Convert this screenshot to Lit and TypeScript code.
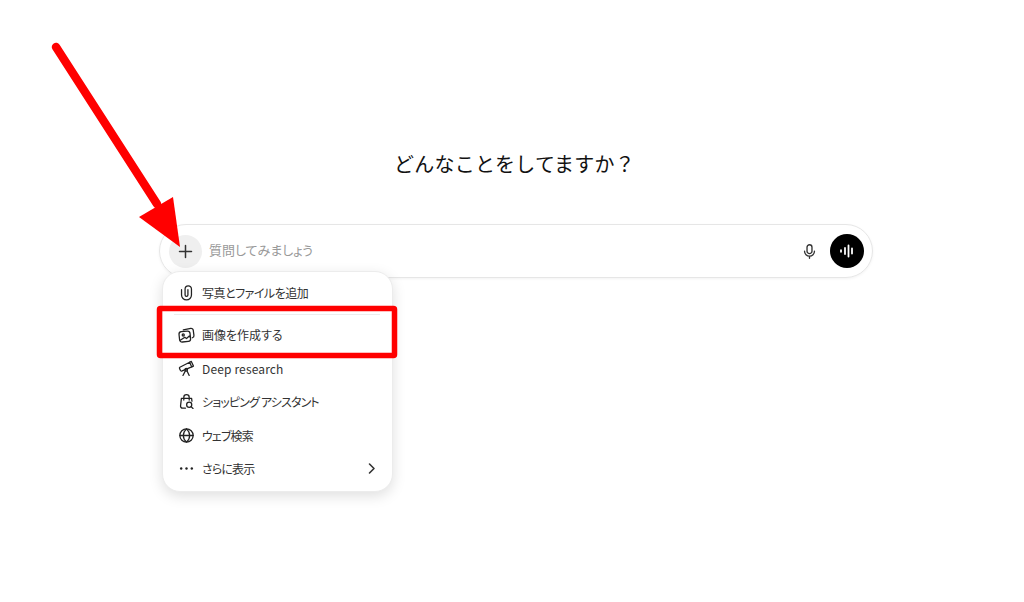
import { LitElement, html, css, svg } from "lit";
import { customElement } from "lit/decorators.js";

const ic = (body: unknown) => html`<svg class="ic" viewBox="0 0 24 24" fill="none" stroke="currentColor" stroke-width="1.8" stroke-linecap="round" stroke-linejoin="round">${body}</svg>`;

const clip = svg`<path d="M5 8v7.5a7 7 0 0 0 14 0V7a4.5 4.5 0 0 0-9 0v8.5a2 2 0 0 0 4 0V8"/>`;
const images = svg`<path d="M7.5 5.6 18 3.4a3 3 0 0 1 3.5 2.5l1 7.4a3 3 0 0 1-2.2 3.3"/><rect x="1.8" y="7.6" width="15.6" height="14.6" rx="3.6" transform="rotate(-6 9.6 14.9)"/><circle cx="7.4" cy="12.6" r="1.5"/><path d="M3.2 20 9.6 15.8l2.4 1.8 4-3.6 1.6 2.4"/>`;
const scope = svg`<path d="M2.6 10.2 16.4 3.2l3 6.6L5.8 15.4a2 2 0 0 1-2.6-1.1L2.2 12a1.4 1.4 0 0 1 .4-1.8Z"/><path d="m16.4 3.2 2.4-1.2 3 6.6-2.4 1.2"/><circle cx="11.6" cy="13.8" r="1.8"/><path d="m10.4 15.4-3.4 6.4M12.8 15.4l3 6.4"/>`;
const bag = svg`<path d="M10.5 21.4H6.4a2.8 2.8 0 0 1-2.8-3.1L4.8 7.6h14.4l.5 4"/><path d="M8.2 10V6a3.8 3.8 0 0 1 7.6 0v4"/><circle cx="15.8" cy="16.6" r="3.6"/><path d="m18.4 19.2 2.8 2.6"/>`;
const globe = svg`<circle cx="12" cy="12" r="9.4"/><path d="M2.6 12h18.8M12 2.6c-6 5.6-6 13.2 0 18.8M12 2.6c6 5.6 6 13.2 0 18.8"/>`;
const dots = svg`<circle cx="4.5" cy="12" r="1.7" fill="currentColor" stroke="none"/><circle cx="12" cy="12" r="1.7" fill="currentColor" stroke="none"/><circle cx="19.5" cy="12" r="1.7" fill="currentColor" stroke="none"/>`;

@customElement("app-root")
export class AppRoot extends LitElement {
  static styles = css`
    :host {
      display: block;
      position: relative;
      height: 602px;
      overflow: hidden;
      background: #fff;
      font-family: "Noto Sans CJK JP", "Noto Sans", sans-serif;
      color: #2f2f2f;
    }
    .page {
      display: flex;
      flex-direction: column;
      padding: 148px 0 0 159px;
      width: 714px;
    }
    h1 {
      margin: 0;
      height: 76px;
      font-size: 20px;
      line-height: 32px;
      font-weight: 400;
      letter-spacing: 0.2px;
      text-align: center;
      color: #111;
      padding-right: 3px;
    }
    .composer {
      box-sizing: border-box;
      height: 54px;
      border: 1px solid #e6e6e6;
      border-radius: 27px;
      box-shadow: 0 1px 3px rgba(0, 0, 0, 0.05);
      display: flex;
      align-items: center;
      padding: 0 8px 0 9px;
      gap: 7px;
    }
    .plus {
      width: 33px;
      height: 33px;
      border-radius: 50%;
      background: #efefef;
      display: flex;
      align-items: center;
      justify-content: center;
      color: #333;
    }
    .plus svg { width: 17px; height: 17px; }
    .ph {
      flex: 1;
      font-size: 13px;
      line-height: 18px;
      margin-top: -2px;
      color: #999;
      font-feature-settings: "palt";
    }
    .mic { width: 17px; height: 17px; color: #333; margin-right: 5px; }
    .voice {
      width: 34px;
      height: 34px;
      border-radius: 50%;
      background: #000;
      display: flex;
      align-items: center;
      justify-content: center;
      color: #fff;
    }
    .voice svg { width: 16px; height: 16px; }
    .menu {
      box-sizing: border-box;
      margin: -7px 0 0 3px;
      width: 231px;
      height: 221px;
      background: #fff;
      border: 1px solid #ececec;
      border-radius: 18px;
      box-shadow: 0 4px 14px rgba(0, 0, 0, 0.13);
      padding: 4px 12px 0 15px;
      display: flex;
      flex-direction: column;
    }
    .row {
      height: 33.5px;
      display: flex;
      align-items: center;
      gap: 7px;
      font-size: 12px;
      color: #333;
      font-feature-settings: "palt";
    }
    .row span { flex: 1; white-space: nowrap; }
    .row span.wide { letter-spacing: 0.15px; }
    .row span.tight { letter-spacing: -0.5px; }
    .row span.tighter { letter-spacing: -0.85px; }
    .ic { width: 17px; height: 17px; flex: none; color: #222; }
    .sep { height: 1px; background: #ececec; margin: 4px 0 3.5px -4px; }
    .chev { width: 15px; height: 15px; color: #333; margin-right: 1.5px; }
    .overlay {
      position: absolute;
      left: 0;
      top: 0;
      width: 1024px;
      height: 602px;
      pointer-events: none;
    }
  `;

  render() {
    return html`
      <div class="page">
        <h1>どんなことをしてますか？</h1>
        <div class="composer">
          <div class="plus">
            <svg viewBox="0 0 17 17" fill="none" stroke="currentColor" stroke-width="1.5" stroke-linecap="round"><path d="M8.5 2.5v12M2.5 8.5h12"/></svg>
          </div>
          <div class="ph">質問してみましょう</div>
          <svg class="mic" viewBox="0 0 24 24" fill="none" stroke="currentColor" stroke-width="1.9" stroke-linecap="round"><rect x="8.5" y="2.5" width="7" height="12.5" rx="3.5"/><path d="M5 11.5a7 7 0 0 0 14 0M12 18.5v3"/></svg>
          <div class="voice">
            <svg viewBox="0 0 16 16" fill="none" stroke="currentColor" stroke-width="1.8" stroke-linecap="round"><path d="M2 7.2v1.6M6 5v6M9.5 2.5v11M13 5.5v5"/></svg>
          </div>
        </div>
        <div class="menu">
          <div class="row">${ic(clip)}<span class="tight">写真とファイルを追加</span></div>
          <div class="sep"></div>
          <div class="row">${ic(images)}<span>画像を作成する</span></div>
          <div class="row">${ic(scope)}<span class="wide">Deep research</span></div>
          <div class="row">${ic(bag)}<span class="tighter">ショッピング アシスタント</span></div>
          <div class="row">${ic(globe)}<span class="tighter">ウェブ検索</span></div>
          <div class="row">${ic(dots)}<span class="tighter">さらに表示</span>
            <svg class="chev" viewBox="0 0 15 15" fill="none" stroke="currentColor" stroke-width="1.6" stroke-linecap="round" stroke-linejoin="round"><path d="m5.5 3 4.5 4.5-4.5 4.5"/></svg>
          </div>
        </div>
      </div>
      <svg class="overlay" viewBox="0 0 1024 602">
        <path d="M56 47 157 204" stroke="#ff0000" stroke-width="8.5" stroke-linecap="round" fill="none"/>
        <path d="M139 217 173 197 180 247Z" fill="#ff0000"/>
        <rect x="159.5" y="308.5" width="235" height="47" rx="1" fill="none" stroke="#ff0000" stroke-width="5.5"/>
      </svg>
    `;
  }
}
